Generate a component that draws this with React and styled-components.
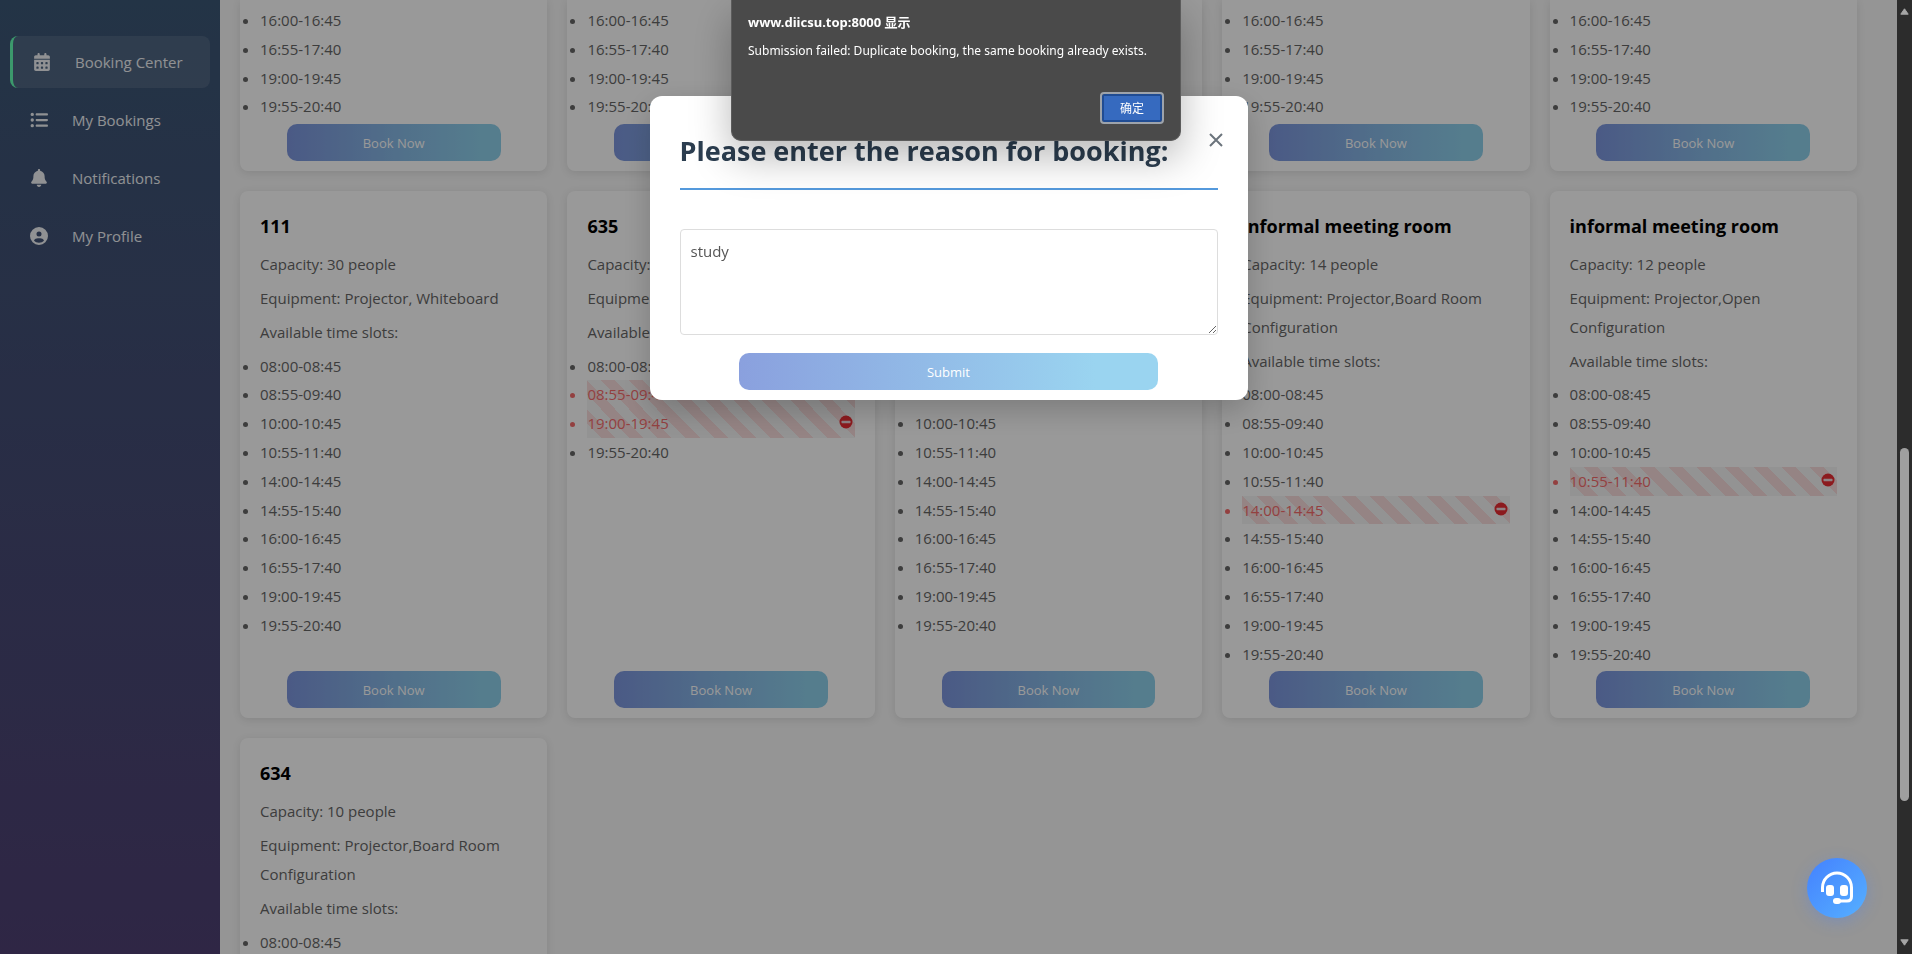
import React from "react";
import styled, { createGlobalStyle } from "styled-components";
import { FaCalendarDays, FaListUl, FaBell, FaCircleUser } from "react-icons/fa6";

const GlobalStyle = createGlobalStyle`
  *, *::before, *::after { box-sizing: border-box; }
  body {
    margin: 0;
    overflow: hidden;
    font-family: "Open Sans", "Noto Sans CJK SC", sans-serif;
    font-size: 15px;
    color: #666;
  }
  button, textarea { font-family: inherit; }
`;

const Shell = styled.div`
  display: flex;
  height: 100vh;
  overflow: hidden;
  background: #f8f8f8;
`;

const Sidebar = styled.nav`
  flex: 0 0 220px;
  display: flex;
  flex-direction: column;
  gap: 6px;
  padding: 36px 10px;
  background: linear-gradient(180deg, #3b5775, #4f4074);
`;

const NavItem = styled.a`
  display: flex;
  align-items: center;
  gap: 24px;
  height: 52px;
  padding: 0 20px;
  border-left: ${(p) => (p.$active ? "3px solid #64ffb4" : "0")};
  border-radius: 8px;
  background: ${(p) => (p.$active ? "rgba(255, 255, 255, 0.1)" : "transparent")};
  color: #f0f2f5;
  text-decoration: none;

  svg { display: block; }
`;

const NavIcon = styled.span`
  width: 18px;
  font-size: 18px;
`;

const Content = styled.main`
  flex: 1;
  min-width: 0;
  padding: 0 40px 0 20px;
  overflow: hidden;
`;

const RoomGrid = styled.div`
  display: grid;
  grid-template-columns: repeat(5, 1fr);
  gap: 20px;
`;

const Card = styled.article`
  display: flex;
  flex-direction: column;
  padding: ${(p) => (p.$scrolled ? "6px" : "20px")} 20px 10px;
  border-radius: ${(p) => (p.$scrolled ? "0 0 8px 8px" : "8px")};
  background: #fff;
  box-shadow: 0 2px 8px rgba(0, 0, 0, 0.1);
`;

const RoomName = styled.h3`
  margin: 0 0 9px;
  font-size: 18px;
  line-height: 30px;
  color: #000;
`;

const Detail = styled.p`
  margin: 0 0 5px;
  line-height: 1.92;
`;

const SlotList = styled.ul`
  margin: 0 0 3px;
  padding: 0;
  line-height: 1.92;
`;

const Slot = styled.li`
  position: relative;
  color: ${(p) => (p.$taken ? "#f56c6c" : "inherit")};
  background: ${(p) =>
    p.$taken
      ? "repeating-linear-gradient(45deg, #f5f5f5 0 10px, #f8dcdc 10px 20px)"
      : "none"};
`;

const TakenMark = styled.svg`
  position: absolute;
  top: 6px;
  right: 2px;
  width: 14px;
  height: 14px;
`;

const GradientButton = styled.button`
  width: ${(p) => (p.$soft ? "78%" : "80%")};
  height: 37px;
  margin: auto auto 0;
  border: 0;
  border-radius: 10px;
  background: ${(p) =>
    p.$soft
      ? "linear-gradient(90deg, #8aa0de, #91b8e6 40%, #9ad4f0 85%)"
      : "linear-gradient(90deg, #7d96de, #87b9e6 50%, #8ed0ec 90%)"};
  color: #fff;
  font-size: 13px;
`;

const ScrollTrack = styled.div`
  flex: 0 0 15px;
  display: flex;
  flex-direction: column;
  align-items: center;
  justify-content: space-between;
  padding: 8px 0;
  background: #2c2c2c;
  position: relative;
  z-index: 2;
`;

const ScrollThumb = styled.div`
  position: absolute;
  top: 47%;
  left: 3px;
  width: 9px;
  height: 37%;
  border-radius: 5px;
  background: #9f9f9f;
`;

const Backdrop = styled.div`
  position: fixed;
  inset: 0 15px 0 0;
  z-index: 1;
  display: flex;
  justify-content: center;
  align-items: flex-start;
  padding-top: 96px;
  background: rgba(0, 0, 0, 0.4);
`;

const Modal = styled.section`
  position: relative;
  display: flex;
  flex-direction: column;
  width: 598px;
  padding: 30px 30px 10px;
  border-radius: 12px;
  background: #fff;
  box-shadow: 0 10px 30px rgba(0, 0, 0, 0.2);
`;

const ModalTitle = styled.h2`
  margin: 0;
  padding-bottom: 13px;
  border-bottom: 2px solid #5499dc;
  font-size: 27px;
  line-height: 49px;
  color: #2c3e50;
`;

const CloseButton = styled.button`
  position: absolute;
  top: 34px;
  right: 22px;
  display: flex;
  padding: 0;
  border: 0;
  background: none;
`;

const Reason = styled.textarea`
  display: block;
  width: 100%;
  height: 106px;
  margin: 39px 0 18px;
  padding: 8px 10px;
  border: 1px solid #ddd;
  border-radius: 4px;
  background: #fff;
  color: #555;
  font-size: 15px;
  line-height: 26px;
  resize: vertical;
  outline: none;
`;

const AlertBox = styled.div`
  position: fixed;
  top: 0;
  left: 50%;
  z-index: 3;
  display: flex;
  flex-direction: column;
  width: 450px;
  height: 141px;
  margin-left: -225px;
  padding: 12px 16px 17px;
  border: 1px solid #5c5c5c;
  border-top: 0;
  border-radius: 0 0 10px 10px;
  background: #4a4a4a;
  box-shadow: 0 16px 40px rgba(0, 0, 0, 0.28);
  color: #fff;
  font-family: "Noto Sans", "Noto Sans CJK SC", sans-serif;
  font-size: 12px;
  line-height: 20px;
`;

const AlertOrigin = styled.strong`
  margin-bottom: 9px;
  font-size: 13px;
`;

const AlertText = styled.p`
  margin: 0;
  white-space: nowrap;
`;

const AlertButton = styled.button`
  align-self: flex-end;
  width: 60px;
  height: 28px;
  margin: auto 2px 1px 0;
  border: 2px solid #204c93;
  border-radius: 2px;
  outline: 2px solid #9da3ab;
  background: #366abf;
  color: #fff;
  font-size: 12px;
`;

const ChatButton = styled.button`
  position: fixed;
  right: 45px;
  bottom: 36px;
  z-index: 2;
  display: flex;
  align-items: center;
  justify-content: center;
  width: 60px;
  height: 60px;
  padding: 0;
  border: 0;
  border-radius: 50%;
  background: linear-gradient(135deg, #4481fe, #56b0ff);
  box-shadow: 0 4px 16px rgba(70, 130, 255, 0.3);
`;

const ALL_SLOTS = [
  "08:00-08:45", "08:55-09:40", "10:00-10:45", "10:55-11:40", "14:00-14:45",
  "14:55-15:40", "16:00-16:45", "16:55-17:40", "19:00-19:45", "19:55-20:40",
];
const EVENING = ALL_SLOTS.slice(6);

const NAV = [
  { label: "Booking Center", Icon: FaCalendarDays, active: true },
  { label: "My Bookings", Icon: FaListUl },
  { label: "Notifications", Icon: FaBell },
  { label: "My Profile", Icon: FaCircleUser },
];

const ROOMS = [
  ...Array.from({ length: 5 }, () => ({ scrolled: true, slots: EVENING })),
  { name: "111", capacity: 30, equipment: "Projector, Whiteboard", slots: ALL_SLOTS },
  {
    name: "635", capacity: 10, equipment: "Projector",
    slots: ["08:00-08:45", "08:55-09:40", "19:00-19:45", "19:55-20:40"],
    taken: ["08:55-09:40", "19:00-19:45"],
  },
  { name: "636", capacity: 10, equipment: "Projector", slots: ALL_SLOTS },
  {
    name: "informal meeting room", capacity: 14,
    equipment: "Projector,Board Room Configuration", slots: ALL_SLOTS, taken: ["14:00-14:45"],
  },
  {
    name: "informal meeting room", capacity: 12,
    equipment: "Projector,Open Configuration", slots: ALL_SLOTS, taken: ["10:55-11:40"],
  },
  { name: "634", capacity: 10, equipment: "Projector,Board Room Configuration", slots: ALL_SLOTS },
];

function RoomCard({ room }) {
  const taken = room.taken || [];
  return (
    <Card $scrolled={room.scrolled}>
      {room.name && (
        <>
          <RoomName>{room.name}</RoomName>
          <Detail>Capacity: {room.capacity} people</Detail>
          <Detail>Equipment: {room.equipment}</Detail>
          <Detail>Available time slots:</Detail>
        </>
      )}
      <SlotList>
        {room.slots.map((slot) => (
          <Slot key={slot} $taken={taken.includes(slot)}>
            {slot}
            {taken.includes(slot) && (
              <TakenMark viewBox="0 0 14 14" aria-hidden="true">
                <circle cx="7" cy="7" r="6.5" fill="#ea2c32" />
                <rect x="2.5" y="5.8" width="9" height="2.4" rx="0.6" fill="#f0d8dc" />
              </TakenMark>
            )}
          </Slot>
        ))}
      </SlotList>
      <GradientButton type="button">Book Now</GradientButton>
    </Card>
  );
}

export default function App() {
  return (
    <>
      <GlobalStyle />
      <Shell>
        <Sidebar>
          {NAV.map(({ label, Icon, active }) => (
            <NavItem key={label} href="#" $active={active}>
              <NavIcon><Icon /></NavIcon>
              {label}
            </NavItem>
          ))}
        </Sidebar>
        <Content>
          <RoomGrid>
            {ROOMS.map((room, i) => <RoomCard key={i} room={room} />)}
          </RoomGrid>
        </Content>
        <ScrollTrack aria-hidden="true">
          <svg width="9" height="7" viewBox="0 0 9 7"><path d="M4.5 0.8 8.2 6.2H0.8Z" fill="#a6a6a6" stroke="#a6a6a6" strokeLinejoin="round" /></svg>
          <ScrollThumb />
          <svg width="9" height="7" viewBox="0 0 9 7"><path d="M4.5 6.2 8.2 0.8H0.8Z" fill="#a6a6a6" stroke="#a6a6a6" strokeLinejoin="round" /></svg>
        </ScrollTrack>
      </Shell>

      <Backdrop>
        <Modal role="dialog" aria-labelledby="reason-title">
          <ModalTitle id="reason-title">Please enter the reason for booking:</ModalTitle>
          <CloseButton type="button" aria-label="Close">
            <svg width="20" height="20" viewBox="0 0 20 20" fill="none" stroke="#6c757d" strokeWidth="2">
              <path d="M4 4 16 16M16 4 4 16" />
            </svg>
          </CloseButton>
          <Reason aria-labelledby="reason-title" defaultValue="study" />
          <GradientButton type="button" $soft>Submit</GradientButton>
        </Modal>
      </Backdrop>

      <ChatButton type="button" aria-label="Customer service">
        <svg width="36" height="36" viewBox="0 0 36 36" fill="none">
          <path d="M3.5 22V17.500A14.500 14.500 0 0 1 32.500 17.500V26.500Q32.500 31 28 31H19" stroke="#fff" strokeWidth="3" />
          <rect x="7" y="15" width="8" height="11" rx="3" fill="#fff" />
          <rect x="21" y="15" width="8" height="11" rx="3" fill="#fff" />
          <rect x="14" y="28" width="8" height="6" rx="3" fill="#fff" />
        </svg>
      </ChatButton>

      <AlertBox role="alertdialog" aria-label="www.diicsu.top:8000">
        <AlertOrigin>www.diicsu.top:8000 显示</AlertOrigin>
        <AlertText>Submission failed: Duplicate booking, the same booking already exists.</AlertText>
        <AlertButton type="button">确定</AlertButton>
      </AlertBox>
    </>
  );
}
